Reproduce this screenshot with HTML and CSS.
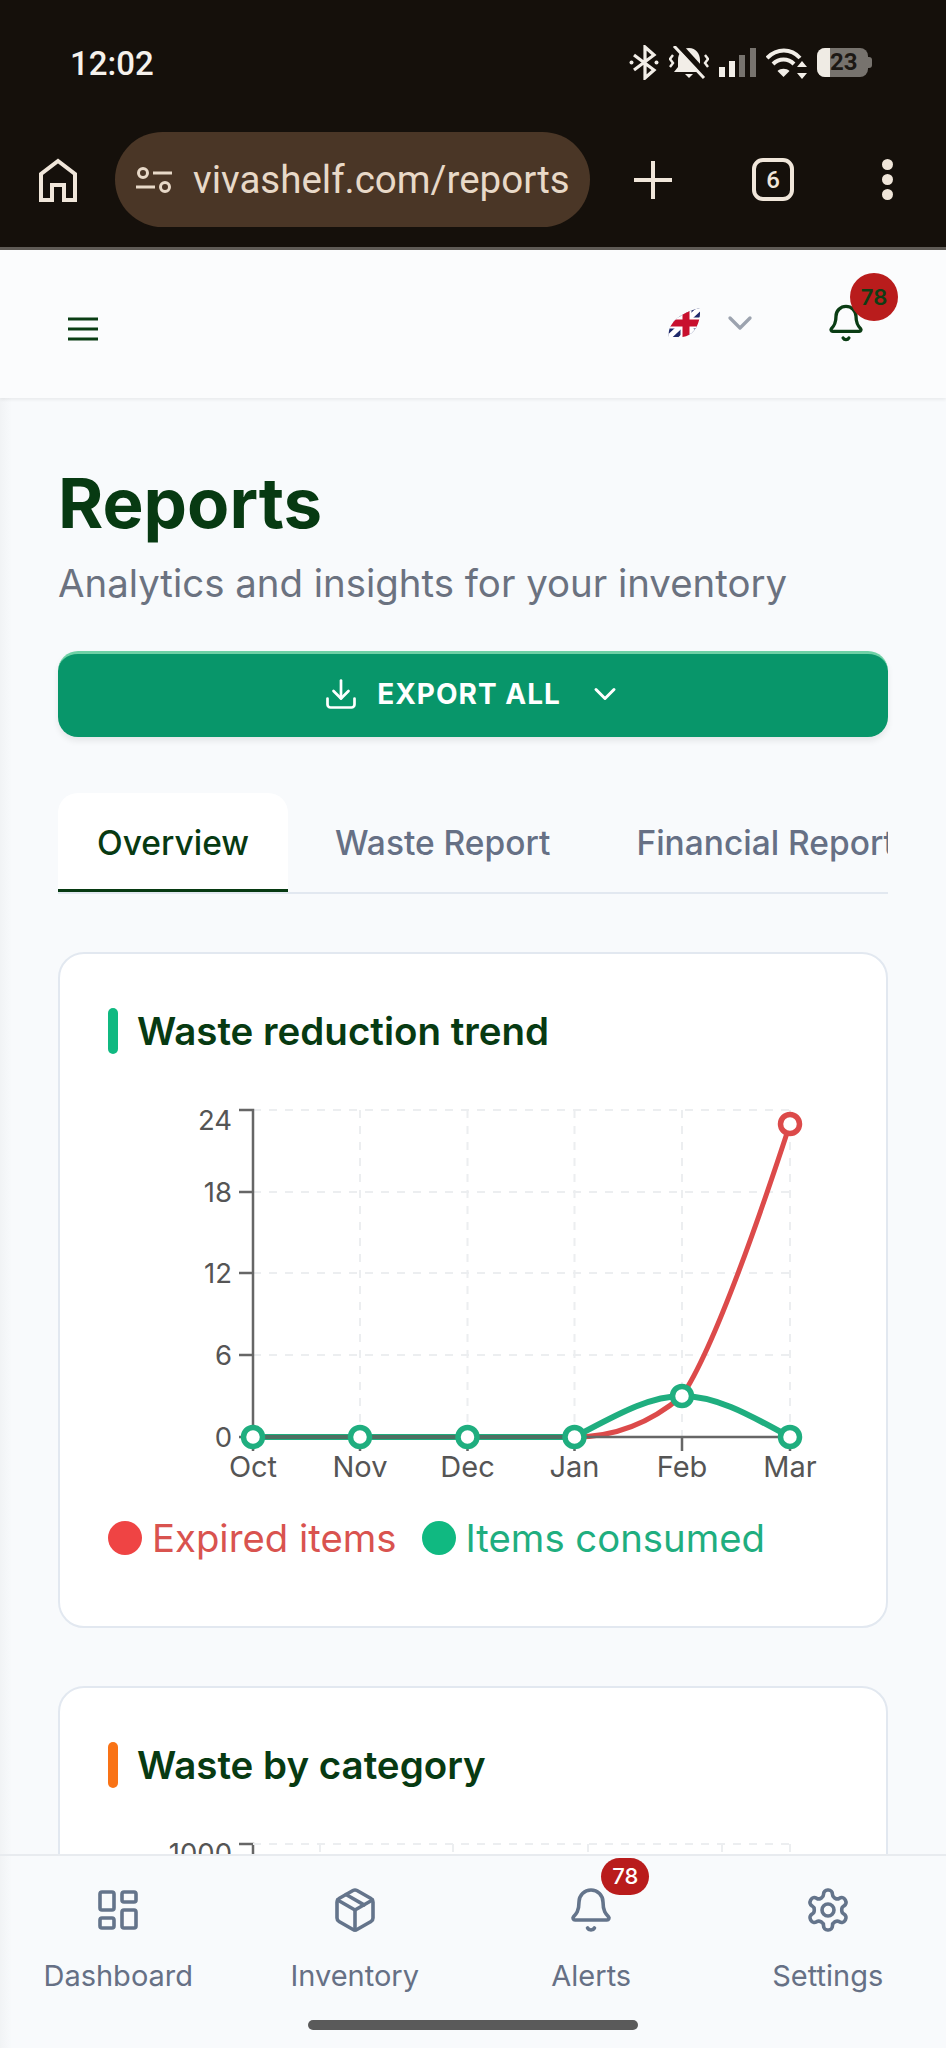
FILE: index.html
```html
<!DOCTYPE html>
<html lang="en">

<head>
  <meta charset="UTF-8">
  <meta name="viewport" content="width=device-width, initial-scale=1.0">
  <title>Reports</title>
  <link rel="stylesheet" href="styles.css">
</head>

<body>
  <!-- phone status bar + browser toolbar -->
  <header class="chrome">
    <div class="status-bar">
      <span class="status-time">12:02</span>
      <div class="status-icons">
        <svg width="30" height="35" viewBox="0 0 30 35" fill="none" stroke="#f2eee8" stroke-width="3.2">
          <path d="M5 10l20 15-9 8V2l9 8L5 25" />
          <circle cx="2.5" cy="17.5" r="2" fill="#f2eee8" stroke="none" />
          <circle cx="27.5" cy="17.5" r="2" fill="#f2eee8" stroke="none" />
        </svg>
        <svg width="40" height="34" viewBox="0 0 40 34" fill="none" stroke="#f2eee8" stroke-width="3">
          <path d="M20 2c-7 0-11 6-11 12v7l-4 5h30l-4-5v-7c0-6-4-12-11-12z" fill="#f2eee8" stroke="none" />
          <path d="M16 28h8l-4 4z" fill="#f2eee8" stroke="none" />
          <path d="M9 -2l30 33" stroke="#15100b" stroke-width="6" />
          <path d="M5 0l30 32" />
          <path d="M4 9l-3 4 3 4-3 4M36 9l3 4-3 4 3 4" stroke-width="2.4" />
        </svg>
        <svg width="37" height="29" viewBox="0 0 37 29">
          <rect x="0" y="19" width="6" height="10" fill="#f2eee8" />
          <rect x="10" y="13" width="6" height="16" fill="#f2eee8" />
          <rect x="20" y="7" width="6" height="22" fill="#77736e" />
          <rect x="31" y="0" width="6" height="29" fill="#77736e" />
        </svg>
        <svg width="41" height="32" viewBox="0 0 41 32" fill="none" stroke="#f2eee8" stroke-width="4">
          <path d="M1 11c10-10 24-10 33 0" />
          <path d="M7 17c6-6 15-6 21 0" />
          <path d="M17.5 30l-6-6c3-3 9-3 12 0z" fill="#f2eee8" stroke="none" />
          <path d="M36 14l5 6H31zM36 32l5-6H31z" fill="#f2eee8" stroke="none" />
        </svg>
        <div class="battery"><span class="battery-level"></span><span class="battery-text">23</span></div>
      </div>
    </div>

    <div class="toolbar">
      <svg class="tool-home" width="38" height="44" viewBox="0 0 38 44" fill="none" stroke="#f0e6da" stroke-width="4">
        <path d="M2 42V16L19 3l17 13v26H25V27H13v15z" />
      </svg>
      <div class="address">
        <svg width="36" height="28" viewBox="0 0 36 28" fill="none" stroke="#e8d9c8" stroke-width="3">
          <circle cx="7" cy="7" r="4.5" />
          <path d="M17 7h19M0 21h19" />
          <circle cx="29" cy="21" r="4.5" />
        </svg>
        <span class="address-text">vivashelf.com/reports</span>
      </div>
      <svg class="tool-plus" width="38" height="38" viewBox="0 0 38 38" stroke="#f0e6da" stroke-width="4">
        <path d="M19 0v38M0 19h38" />
      </svg>
      <div class="tool-tabs">6</div>
      <div class="tool-dots"><i></i><i></i><i></i></div>
    </div>
  </header>

  <nav class="topbar">
    <svg class="menu-icon" width="30" height="24" viewBox="0 0 30 24" stroke="#0a3d14" stroke-width="3.2">
      <path d="M0 2h30M0 12h30M0 22h30" />
    </svg>
    <div class="topbar-right">
      <svg class="flag" width="32" height="30" viewBox="0 0 32 30">
        <defs>
          <clipPath id="leaf">
            <path d="M1 29C-1 17 10 5 32 0c1 14-5 31-24 29z" />
          </clipPath>
        </defs>
        <g clip-path="url(#leaf)">
          <rect width="32" height="30" fill="#fff" />
          <path d="M0 30L32 0" stroke="#1f2a6b" stroke-width="13" />
          <path d="M0 0L32 30" stroke="#1f2a6b" stroke-width="13" />
          <path d="M0 30L32 0M0 0L32 30" stroke="#fff" stroke-width="5" />
          <path d="M18 0v30M0 15h32" stroke="#fff" stroke-width="11" />
          <path d="M18 0v30M0 15h32" stroke="#c8102e" stroke-width="7" />
        </g>
      </svg>
      <svg class="lang-chevron" width="40" height="40" viewBox="0 0 24 24" fill="none" stroke="#9ca3af" stroke-width="2" stroke-linecap="round" stroke-linejoin="round">
        <path d="m6 9 6 6 6-6" />
      </svg>
      <div class="top-bell">
        <svg width="40" height="40" viewBox="0 0 24 24" fill="none" stroke="#0a3d14" stroke-width="2" stroke-linecap="round" stroke-linejoin="round">
          <path d="M10.268 21a2 2 0 0 0 3.464 0" />
          <path d="M3.262 15.326A1 1 0 0 0 4 17h16a1 1 0 0 0 .74-1.673C19.41 13.956 18 12.499 18 8A6 6 0 0 0 6 8c0 4.499-1.411 5.956-2.738 7.326" />
        </svg>
        <span class="top-badge">78</span>
      </div>
    </div>
  </nav>

  <main class="page">
    <h1 class="page-title">Reports</h1>
    <p class="page-sub">Analytics and insights for your inventory</p>

    <button class="export-btn">
      <svg width="36" height="36" viewBox="0 0 24 24" fill="none" stroke="#fff" stroke-width="1.8" stroke-linecap="round" stroke-linejoin="round">
        <path d="M21 15v4a2 2 0 0 1-2 2H5a2 2 0 0 1-2-2v-4" />
        <path d="m7 10 5 5 5-5" />
        <path d="M12 15V3" />
      </svg>
      <span>EXPORT ALL</span>
      <svg class="export-chevron" width="36" height="36" viewBox="0 0 24 24" fill="none" stroke="#fff" stroke-width="2" stroke-linecap="round" stroke-linejoin="round">
        <path d="m6 9 6 6 6-6" />
      </svg>
    </button>

    <div class="tabs">
      <div class="tab active">Overview</div>
      <div class="tab">Waste Report</div>
      <div class="tab">Financial Report</div>
    </div>

    <section class="card">
      <h2 class="card-title"><i class="title-bar green"></i>Waste reduction trend</h2>
      <svg class="chart" width="726" height="405" viewBox="0 0 726 405">
        <g class="grid">
          <path d="M145 15H682M145 97H682M145 178H682M145 260H682" />
          <path d="M252 15V342M359.500 15V342M466.500 15V342M574 15V342M682 15V342" />
        </g>
        <path class="line-red" d="M466.500 342C502 342 540 330 574 301C604 256 646 139 682 29" />
        <path class="line-green" d="M145 342H466.500C505 322 540 301 574 301C610 301 645 322 682 342" />
        <path class="axis" d="M131 15H145V342H682M131 97H145M131 178H145M131 260H145M131 342H145M145 342V356M252 342V356M359.500 342V356M466.500 342V356M574 342V356M682 342V356" />
        <path class="axis-over" d="M145 342H466.500" />
        <g class="ticks-y">
          <text x="124" y="35">24</text>
          <text x="124" y="107">18</text>
          <text x="124" y="188">12</text>
          <text x="124" y="270">6</text>
          <text x="124" y="352">0</text>
        </g>
        <g class="ticks-x">
          <text x="145" y="382">Oct</text>
          <text x="252" y="382">Nov</text>
          <text x="359.500" y="382">Dec</text>
          <text x="466.500" y="382">Jan</text>
          <text x="574" y="382">Feb</text>
          <text x="682" y="382">Mar</text>
        </g>
        <circle class="dot-red" cx="682" cy="29" r="9.500" />
        <g class="dot-green">
          <circle cx="145" cy="342" r="9.500" />
          <circle cx="252" cy="342" r="9.500" />
          <circle cx="359.500" cy="342" r="9.500" />
          <circle cx="466.500" cy="342" r="9.500" />
          <circle cx="574" cy="301" r="9.500" />
          <circle cx="682" cy="342" r="9.500" />
        </g>
      </svg>
      <div class="legend">
        <span class="legend-item red"><i></i>Expired items</span>
        <span class="legend-item green"><i></i>Items consumed</span>
      </div>
    </section>

    <section class="card">
      <h2 class="card-title"><i class="title-bar orange"></i>Waste by category</h2>
      <svg class="chart-peek" width="726" height="60" viewBox="0 0 726 60">
        <text x="124" y="21">1000</text>
        <path class="axis" d="M131 2H145V60" />
        <g class="grid">
          <path d="M145 2H682" />
          <path d="M212 2V60M345 2V60M480 2V60M614 2V60M682 2V60" />
        </g>
      </svg>
    </section>
  </main>

  <footer class="bottom-nav">
    <div class="nav-items">
      <div class="nav-item">
        <svg width="48" height="48" viewBox="0 0 24 24">
          <rect width="7" height="9" x="3" y="3" rx="1" />
          <rect width="7" height="5" x="14" y="3" rx="1" />
          <rect width="7" height="9" x="14" y="12" rx="1" />
          <rect width="7" height="5" x="3" y="16" rx="1" />
        </svg>
        <span>Dashboard</span>
      </div>
      <div class="nav-item">
        <svg width="48" height="48" viewBox="0 0 24 24">
          <path d="M11 21.73a2 2 0 0 0 2 0l7-4A2 2 0 0 0 21 16V8a2 2 0 0 0-1-1.73l-7-4a2 2 0 0 0-2 0l-7 4A2 2 0 0 0 3 8v8a2 2 0 0 0 1 1.73z" />
          <path d="M12 22V12" />
          <path d="M3.290 7 12 12l8.710-5" />
          <path d="m7.500 4.270 9 5.150" />
        </svg>
        <span>Inventory</span>
      </div>
      <div class="nav-item">
        <div class="nav-bell">
          <svg width="48" height="48" viewBox="0 0 24 24">
            <path d="M10.268 21a2 2 0 0 0 3.464 0" />
            <path d="M3.262 15.326A1 1 0 0 0 4 17h16a1 1 0 0 0 .74-1.673C19.41 13.956 18 12.499 18 8A6 6 0 0 0 6 8c0 4.499-1.411 5.956-2.738 7.326" />
          </svg>
          <span class="nav-badge">78</span>
        </div>
        <span>Alerts</span>
      </div>
      <div class="nav-item">
        <svg width="48" height="48" viewBox="0 0 24 24">
          <path d="M12.220 2h-.44a2 2 0 0 0-2 2v.18a2 2 0 0 1-1 1.730l-.43.25a2 2 0 0 1-2 0l-.15-.08a2 2 0 0 0-2.730.73l-.22.38a2 2 0 0 0 .73 2.730l.15.1a2 2 0 0 1 1 1.720v.51a2 2 0 0 1-1 1.740l-.15.09a2 2 0 0 0-.73 2.730l.22.38a2 2 0 0 0 2.730.73l.15-.08a2 2 0 0 1 2 0l.43.25a2 2 0 0 1 1 1.730V20a2 2 0 0 0 2 2h.44a2 2 0 0 0 2-2v-.18a2 2 0 0 1 1-1.730l.43-.25a2 2 0 0 1 2 0l.15.08a2 2 0 0 0 2.730-.73l.22-.39a2 2 0 0 0-.73-2.730l-.15-.08a2 2 0 0 1-1-1.740v-.5a2 2 0 0 1 1-1.740l.15-.09a2 2 0 0 0 .73-2.730l-.22-.38a2 2 0 0 0-2.730-.73l-.15.08a2 2 0 0 1-2 0l-.43-.25a2 2 0 0 1-1-1.730V4a2 2 0 0 0-2-2z" />
          <circle cx="12" cy="12" r="3" />
        </svg>
        <span>Settings</span>
      </div>
    </div>
    <div class="home-bar"></div>
  </footer>
</body>

</html>
```

FILE: styles.css
```css
html {
  box-sizing: border-box;
  font-family: 'Inter', sans-serif;
  font-size: 16px;
}

*,
*::after,
*::before {
  box-sizing: inherit;
}

body {
  margin: 0;
  width: 946px;
  height: 2048px;
  overflow: hidden;
  position: relative;
  background: linear-gradient(90deg, #f1f3f5, #f8fafc 12px);
}

svg {
  display: block;
  flex-shrink: 0;
}

/* browser chrome */
.chrome {
  height: 250px;
  background-color: #15100b;
  border-bottom: 3px solid #5f5b56;
}

.status-bar {
  height: 132px;
  padding: 45px 74px 0 70px;
  display: flex;
  justify-content: space-between;
  align-items: flex-start;
}

.status-time {
  font-family: 'Roboto', sans-serif;
  font-size: 33px;
  font-weight: 500;
  line-height: 38px;
  color: #f5f1ec;
}

.status-icons {
  display: flex;
  align-items: center;
  gap: 10px;
}

.battery {
  position: relative;
  width: 51px;
  height: 29px;
  margin-right: 4px;
  border-radius: 8px;
  background-color: #77736e;
}

.battery::after {
  content: "";
  position: absolute;
  top: 9px;
  right: -4px;
  width: 4px;
  height: 11px;
  border-radius: 0 3px 3px 0;
  background-color: #77736e;
}

.battery-level {
  display: block;
  width: 13px;
  height: 100%;
  border-radius: 8px 0 0 8px;
  background-color: #efebe4;
}

.battery-text {
  position: absolute;
  top: 0;
  left: 13px;
  font-family: 'Roboto', sans-serif;
  font-size: 24px;
  font-weight: 700;
  line-height: 29px;
  color: #1c1814;
}

.toolbar {
  height: 95px;
  padding-left: 39px;
  display: flex;
  align-items: center;
}

.address {
  margin-left: 38px;
  width: 475px;
  height: 95px;
  padding-left: 21px;
  border-radius: 48px;
  background-color: #4a3626;
  display: flex;
  align-items: center;
  gap: 21px;
}

.address-text {
  font-family: 'Roboto', sans-serif;
  font-size: 38.500px;
  color: #e8d9c8;
}

.tool-plus {
  margin-left: 44px;
}

.tool-tabs {
  margin-left: 80px;
  width: 42px;
  height: 43px;
  border: 4px solid #f0e6da;
  border-radius: 11px;
  display: flex;
  align-items: center;
  justify-content: center;
  font-family: 'Roboto', sans-serif;
  font-size: 24px;
  font-weight: 500;
  color: #f0e6da;
}

.tool-dots {
  margin-left: 88px;
  display: flex;
  flex-direction: column;
  gap: 4px;
}

.tool-dots i {
  display: block;
  width: 11px;
  height: 11px;
  border-radius: 50%;
  background-color: #f0e6da;
}

/* app top bar */
.topbar {
  height: 148px;
  padding: 0 80px 0 68px;
  background-color: #fbfcfd;
  box-shadow: 0 2px 3px rgba(0, 0, 0, .06);
  display: flex;
  justify-content: space-between;
  align-items: center;
}

.menu-icon {
  margin-top: 10px;
}

.topbar-right {
  display: flex;
  align-items: center;
  margin-top: -2px;
}

.lang-chevron {
  margin-left: 20px;
}

.top-bell {
  position: relative;
  margin-left: 66px;
}

.top-badge {
  position: absolute;
  top: -30px;
  left: 24px;
  width: 48px;
  height: 48px;
  border-radius: 50%;
  background-color: #b91c1c;
  color: #0f3d14;
  font-size: 22px;
  font-weight: 600;
  line-height: 48px;
  text-align: center;
}

/* page */
.page {
  padding: 0 58px;
}

.page-title {
  margin: 62px 0 0;
  font-size: 69px;
  font-weight: 700;
  line-height: 86px;
  color: #073a12;
}

.page-sub {
  margin: 14px 0 0;
  font-size: 38.400px;
  line-height: 46px;
  color: #6b7280;
}

.export-btn {
  margin-top: 45px;
  width: 100%;
  height: 86px;
  padding-bottom: 4px;
  border: 0;
  border-top: 3px solid #6fd1a6;
  border-radius: 20px;
  background-color: #08966a;
  box-shadow: 0 4px 6px rgba(0, 0, 0, .08);
  display: flex;
  align-items: center;
  justify-content: center;
  gap: 18px;
  font-family: inherit;
  font-size: 28px;
  font-weight: 700;
  letter-spacing: 1px;
  color: #fff;
}

.export-chevron {
  margin-left: 8px;
}

.tabs {
  margin-top: 56px;
  display: flex;
  gap: 8px;
  overflow: hidden;
  border-bottom: 2px solid #e2e8f0;
}

.tab {
  flex-shrink: 0;
  height: 99px;
  padding: 0 39px;
  display: flex;
  align-items: center;
  font-size: 33.500px;
  font-weight: 500;
  color: #667085;
  border-radius: 20px 20px 0 0;
}

.tab.active {
  padding-top: 3px;
  background-color: #fff;
  color: #073a12;
  border-bottom: 3px solid #073a12;
}

.card {
  margin-top: 58px;
  padding: 50px 48px 0;
  height: 676px;
  border: 2px solid #e2e8f0;
  border-radius: 26px;
  background-color: #fff;
}

.card-title {
  margin: 0;
  display: flex;
  align-items: center;
  gap: 19px;
  font-size: 38.500px;
  font-weight: 600;
  line-height: 54px;
  color: #073a12;
}

.title-bar {
  width: 10px;
  height: 46px;
  border-radius: 5px;
}

.title-bar.green {
  background-color: #10b981;
}

.title-bar.orange {
  background-color: #f97316;
}

/* chart */
.chart {
  margin-top: 37px;
}

.grid path {
  fill: none;
  stroke: #eceef0;
  stroke-width: 2;
  stroke-dasharray: 8 8;
}

.axis {
  fill: none;
  stroke: #666;
  stroke-width: 2.500;
}

.axis-over {
  fill: none;
  stroke: #4f6f62;
  stroke-width: 4;
}

.line-red {
  fill: none;
  stroke: #dc4a4a;
  stroke-width: 5;
}

.line-green {
  fill: none;
  stroke: #1fae7f;
  stroke-width: 6;
}

.ticks-y text,
.chart-peek text {
  font-size: 27.500px;
  fill: #555;
  text-anchor: end;
}

.ticks-x text {
  font-size: 29px;
  fill: #555;
  text-anchor: middle;
}

.dot-red {
  fill: #fff;
  stroke: #dc4a4a;
  stroke-width: 5.500;
}

.dot-green circle {
  fill: #fff;
  stroke: #1fae7f;
  stroke-width: 5.500;
}

.legend {
  margin-top: 15px;
  display: flex;
  gap: 25px;
  font-size: 38.300px;
  line-height: 46px;
}

.legend-item {
  display: flex;
  align-items: center;
  gap: 10px;
}

.legend-item i {
  width: 34px;
  height: 34px;
  border-radius: 50%;
}

.legend-item.red {
  color: #d9534f;
}

.legend-item.red i {
  background-color: #ef4444;
}

.legend-item.green {
  color: #1fae7f;
}

.legend-item.green i {
  background-color: #10b981;
}

.chart-peek {
  margin-top: 50px;
}

/* fixed bottom nav lies over the page */
.bottom-nav {
  position: absolute;
  left: 0;
  right: 0;
  bottom: 0;
  height: 194px;
  background: linear-gradient(90deg, #f1f3f5, #f8fafc 12px);
  border-top: 2px solid #e8ebef;
}

.nav-items {
  height: 164px;
  padding-top: 30px;
  display: grid;
  grid-template-columns: repeat(4, 1fr);
}

.nav-item {
  display: flex;
  flex-direction: column;
  align-items: center;
  gap: 20px;
  font-size: 29px;
  line-height: 44px;
  color: #667085;
}

.nav-item svg {
  fill: none;
  stroke: #64748b;
  stroke-width: 1.800;
  stroke-linecap: round;
  stroke-linejoin: round;
}

.nav-bell {
  position: relative;
}

.nav-badge {
  position: absolute;
  top: -28px;
  left: 34px;
  width: 48px;
  height: 37px;
  border-radius: 19px;
  background-color: #b91c1c;
  color: #fff;
  font-size: 22px;
  font-weight: 500;
  line-height: 37px;
  text-align: center;
}

.home-bar {
  margin: 0 auto;
  width: 330px;
  height: 10px;
  border-radius: 5px;
  background-color: #5a5a5a;
}
```
